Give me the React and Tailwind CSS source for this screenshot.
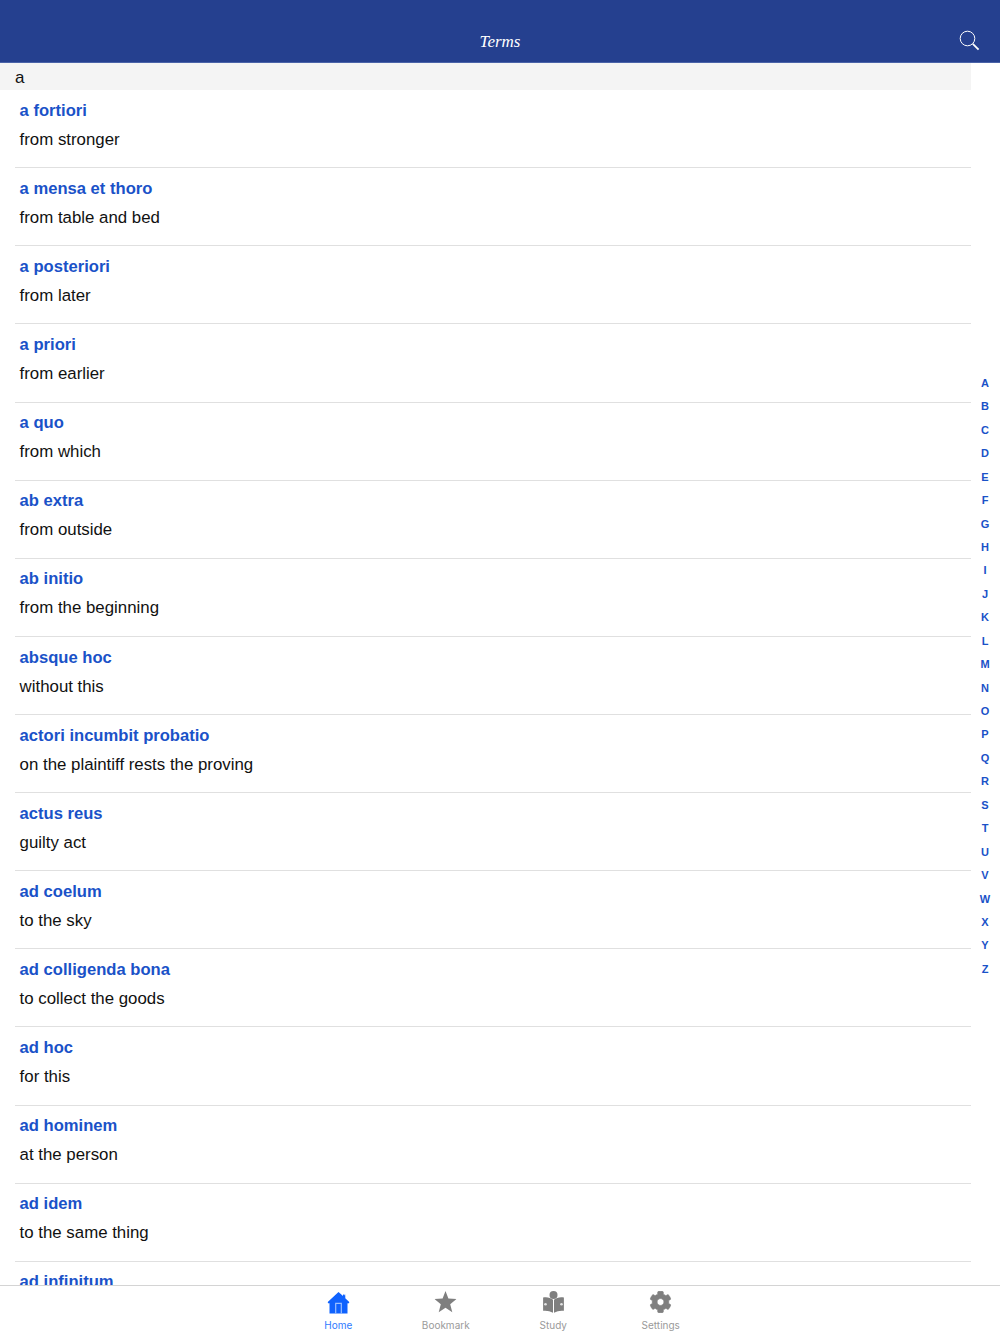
import { FaCog } from "react-icons/fa";

const terms = [
  ["a fortiori", "from stronger"],
  ["a mensa et thoro", "from table and bed"],
  ["a posteriori", "from later"],
  ["a priori", "from earlier"],
  ["a quo", "from which"],
  ["ab extra", "from outside"],
  ["ab initio", "from the beginning"],
  ["absque hoc", "without this"],
  ["actori incumbit probatio", "on the plaintiff rests the proving"],
  ["actus reus", "guilty act"],
  ["ad coelum", "to the sky"],
  ["ad colligenda bona", "to collect the goods"],
  ["ad hoc", "for this"],
  ["ad hominem", "at the person"],
  ["ad idem", "to the same thing"],
  ["ad infinitum", ""],
];

const letters = "ABCDEFGHIJKLMNOPQRSTUVWXYZ".split("");

function HomeIcon() {
  return (
    <svg width="22" height="22" viewBox="0 0 22 22" className="mt-px">
      <path
        fill="#0f62fe"
        d="M11 0 L15.5 4 V2.5 H17.8 V6.2 L22 10.3 L21.4 11.2 H20 V21.5 H2 V11.2 H0.6 L0 10.3 Z"
      />
      <path fill="#ffffff" d="M15.9 2 L18 4.2 L18 1.8 Z" opacity="0.5" />
      <path fill="#9cc0ff" d="M7.6 21.5 V10.8 H14.4 V21.5 H13.2 V12 H8.8 V21.5 Z" />
    </svg>
  );
}

function StarIcon() {
  return (
    <svg width="22" height="22" viewBox="0 0 22 22" fill="#7f7f7f">
      <path d="M11 0 L13.9 7.6 L22 8 L15.7 13.2 L17.8 21.2 L11 16.7 L4.2 21.2 L6.3 13.2 L0 8 L8.1 7.6 Z" />
    </svg>
  );
}

function StudyIcon() {
  return (
    <svg width="22" height="22" viewBox="0 0 22 22" fill="#7f7f7f">
      <circle cx="11" cy="4" r="4" />
      <path d="M0.6 6.5 C4.2 5.6 8 6.6 10.5 8.8 V21.8 C7.6 20 4 19.4 0.6 19.8 Z" />
      <path d="M21.4 6.5 C17.8 5.6 14 6.6 11.5 8.8 V21.8 C14.4 20 18 19.4 21.4 19.8 Z" />
      <circle cx="3" cy="13.2" r="1.3" fill="#e4e4e4" />
      <circle cx="19" cy="13.2" r="1.3" fill="#e4e4e4" />
    </svg>
  );
}

function Tab({ label, active, children }) {
  return (
    <div className="w-[107.5px] flex flex-col items-center -translate-x-[0.5px]">
      <div className="h-[22px] mt-[5px]">{children}</div>
      <span
        className={`text-[10px] leading-[12px] mt-[6px] font-['Inter',sans-serif] ${
          active ? "text-[#2f7bff]" : "text-[#9a9a9a]"
        }`}
      >
        {label}
      </span>
    </div>
  );
}

export default function App() {
  return (
    <div className="relative w-[1000px] h-[1334px] overflow-hidden bg-white font-['Liberation_Sans',Arial,sans-serif] flex flex-col">
      {/* nav bar */}
      <header className="relative h-[63px] shrink-0 bg-[#25408f] border-b border-[#4a63a8]">
        <div className="pt-[32px] text-center text-white text-[17px] leading-[20px] italic font-['Liberation_Serif',serif]">
          Terms
        </div>
        <svg
          className="absolute left-[959px] top-[29.5px]"
          width="21"
          height="21"
          viewBox="0 0 21 21"
          fill="none"
          stroke="#ffffff"
        >
          <circle cx="8.5" cy="8.5" r="7.3" strokeWidth="1" />
          <path d="M13.8 13.8 L19.6 19.6" strokeWidth="1.8" />
        </svg>
      </header>

      {/* list */}
      <main className="flex-1 min-h-0 overflow-hidden">
        <div className="w-[971px] h-[27.14px] bg-[#f4f4f4] pl-[15px] text-[17px] leading-[29px] text-[#111111]">a</div>
        {terms.map(([term, meaning], i) => (
          <div key={i} className="ml-[15px] w-[956px] h-[78.11px] border-b border-[#e0e0e0] pl-[4.6px] pt-[8.7px]">
            <div className="text-[16.6px] leading-[24px] font-bold text-[#1a52c8]">{term}</div>
            <div className="text-[16.83px] leading-[24px] mt-[5px] text-[#111111]">{meaning}</div>
          </div>
        ))}
      </main>

      {/* tab bar */}
      <nav className="h-[49px] shrink-0 bg-white border-t border-[#d4d4d4] flex justify-center">
        <Tab label="Home" active>
          <HomeIcon />
        </Tab>
        <Tab label="Bookmark">
          <StarIcon />
        </Tab>
        <Tab label="Study">
          <StudyIcon />
        </Tab>
        <Tab label="Settings">
          <FaCog size={22} color="#7f7f7f" strokeWidth={16} />
        </Tab>
      </nav>

      {/* section index */}
      <div className="absolute left-[970px] top-[371.9px] w-[30px] flex flex-col items-center">
        {letters.map((l) => (
          <div key={l} className="h-[23.45px] text-[11px] leading-[23.45px] font-bold text-[#1a52c8]">
            {l}
          </div>
        ))}
      </div>
    </div>
  );
}
